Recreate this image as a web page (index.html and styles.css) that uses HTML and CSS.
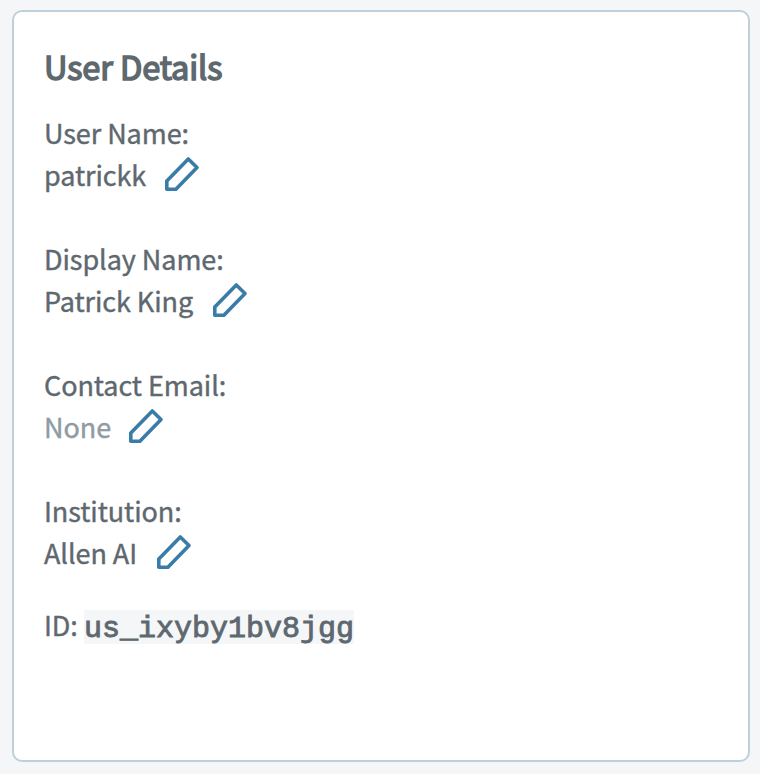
FILE: index.html
```html
<!DOCTYPE html>
<html lang="en">
<head>
<meta charset="utf-8">
<title>User Details</title>
<link rel="stylesheet" href="styles.css">
</head>
<body>
<svg class="sprite" aria-hidden="true"><symbol id="pencil" viewBox="0 0 36 36"><path d="M2.8 26 24.3 4 33 12.5 11.9 34.2H2.8Z" fill="none" stroke="currentColor" stroke-width="3.6" stroke-linejoin="round"/></symbol></svg>
<main class="card">
  <h1 class="title">User Details</h1>
  <section class="field">
    <div class="label">User Name:</div>
    <div class="value"><span class="username">patrickk</span><svg class="edit"><use href="#pencil"/></svg></div>
  </section>
  <section class="field">
    <div class="label">Display Name:</div>
    <div class="value"><span class="display">Patrick King</span><svg class="edit"><use href="#pencil"/></svg></div>
  </section>
  <section class="field">
    <div class="label">Contact Email:</div>
    <div class="value"><span class="email empty">None</span><svg class="edit"><use href="#pencil"/></svg></div>
  </section>
  <section class="field">
    <div class="label">Institution:</div>
    <div class="value"><span class="institution">Allen AI</span><svg class="edit"><use href="#pencil"/></svg></div>
  </section>
  <div class="id-row"><span class="id-label">ID:</span><code class="id">us_ixyby1bv8jgg</code></div>
</main>
</body>
</html>
```
FILE: styles.css
```css
* { box-sizing: border-box; }
body {
  margin: 0;
  height: 774px;
  padding: 10px 10px 12px 12px;
  background: #f4f6f8;
  color: #5e686f;
  font: 400 27px/42px "Noto Sans CJK SC", "Noto Sans", sans-serif;
  letter-spacing: -0.07px;
  -webkit-text-stroke: 0.4px currentColor;
}
.sprite { position: absolute; width: 0; height: 0; }
.card {
  height: 752px;
  padding: 30px;
  border: 2px solid #bfd0db;
  border-radius: 10px;
  background: #fff;
}
.title {
  margin: 0 0 22px;
  font-size: 32.5px;
  font-weight: 400;
  line-height: 48px;
  letter-spacing: -0.1px;
  -webkit-text-stroke: 1.5px currentColor;
}
.field { height: 126px; white-space: nowrap; }
.value { display: flex; height: 42px; }
.edit { width: 36px; height: 36px; margin-top: 1px; color: #3a7ca8; }
.username { width: 120px; }
.display { width: 168px; }
.email { width: 84px; }
.institution { width: 112px; }
.empty { color: #8f9ba3; }
.id-row { display: flex; align-items: flex-start; height: 42px; margin-top: -12px; }
.id-label { width: 40px; }
.id {
  width: 270px;
  height: 34px;
  margin-top: 6px;
  background: #f4f6f8;
  font: 400 30px/38px "Courier", "Liberation Mono", monospace;
  letter-spacing: 0;
  -webkit-text-stroke: 0.9px currentColor;
}
```
